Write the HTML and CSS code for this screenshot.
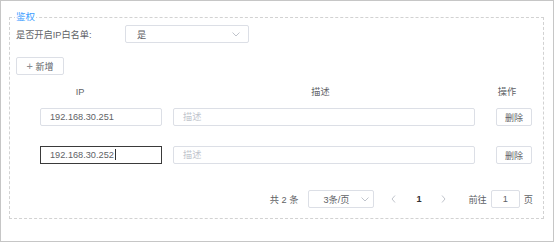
FILE: index.html
```html
<!DOCTYPE html>
<html>
<head>
  <title>鉴权</title>
  <link rel="stylesheet" href="styles.css">
</head>
<body>
  <div class="frame">
    <fieldset class="auth-box">
      <legend>鉴权</legend>

      <div class="form-row">
        <label class="form-label">是否开启IP白名单:</label>
        <div class="select wide">
          <span>是</span>
          <svg class="arrow" width="8" height="5" viewBox="0 0 8 5"><path d="M0.5 0.5 L4 4 L7.5 0.5" fill="none" stroke="#c0c4cc" stroke-width="1"/></svg>
        </div>
      </div>

      <button class="btn add-btn"><span class="plus">+</span> 新增</button>

      <div class="table-head">
        <div class="th th-ip">IP</div>
        <div class="th th-desc">描述</div>
        <div class="th th-op">操作</div>
      </div>

      <div class="table-row">
        <div class="input ip">192.168.30.251</div>
        <div class="input desc placeholder">描述</div>
        <button class="btn del-btn">删除</button>
      </div>

      <div class="table-row second">
        <div class="input ip focused">192.168.30.252<span class="caret"></span></div>
        <div class="input desc placeholder">描述</div>
        <button class="btn del-btn">删除</button>
      </div>

      <div class="pager">
        <span class="total">共 2 条</span>
        <div class="select sizes">
          <span>3条/页</span>
          <svg class="arrow" width="8" height="5" viewBox="0 0 8 5"><path d="M0.5 0.5 L4 4 L7.5 0.5" fill="none" stroke="#c0c4cc" stroke-width="1"/></svg>
        </div>
        <span class="page-btn">
          <svg width="5" height="8" viewBox="0 0 5 8"><path d="M4 0.5 L1 4 L4 7.5" fill="none" stroke="#c0c4cc" stroke-width="1"/></svg>
        </span>
        <span class="page-btn current">1</span>
        <span class="page-btn">
          <svg width="5" height="8" viewBox="0 0 5 8"><path d="M1 0.5 L4 4 L1 7.5" fill="none" stroke="#c0c4cc" stroke-width="1"/></svg>
        </span>
        <span class="jump">前往</span>
        <div class="input jump-input">1</div>
        <span class="jump-unit">页</span>
      </div>
    </fieldset>
  </div>
</body>
</html>
```

FILE: styles.css
```css
body {
  margin: 0;
  background: #ffffff;
  font-family: 'Liberation Sans', 'Noto Sans CJK SC', sans-serif;
  font-size: 9.2px;
  color: #606266;
}

.frame {
  width: 552px;
  height: 240px;
  border: 1px solid #c6c6c6;
}

.auth-box {
  box-sizing: border-box;
  width: 535px;
  height: 208px;
  margin: 10px 0 0 8px;
  padding: 0 6px;
  border: 1px dashed #d2d2d2;
}

.auth-box legend {
  padding: 0 1px;
  margin-left: -1px;
  line-height: 12px;
  font-size: 9.5px;
  color: #409eff;
}

.form-row {
  display: flex;
  align-items: center;
  margin-top: 2px;
}

.form-label {
  width: 109px;
  color: #606266;
}

.select {
  box-sizing: border-box;
  display: flex;
  align-items: center;
  justify-content: space-between;
  height: 18px;
  border: 1px solid #dcdfe6;
  border-radius: 2px;
}

.select.wide {
  width: 124px;
  padding: 0 8px 0 11px;
}

.arrow {
  display: block;
}

.btn {
  box-sizing: border-box;
  height: 18px;
  padding: 0;
  background: #ffffff;
  border: 1px solid #dcdfe6;
  border-radius: 2px;
  font-family: inherit;
  font-size: 9px;
  color: #606266;
}

.add-btn {
  display: block;
  width: 48px;
  margin-top: 14px;
}

.plus {
  font-size: 11px;
  font-weight: 300;
  color: #8a8c90;
}

.table-head {
  display: flex;
  height: 16px;
  line-height: 16px;
  margin-top: 9px;
}

.th {
  text-align: center;
  white-space: nowrap;
  color: #606266;
}

.th-ip {
  width: 128px;
}

.th-desc {
  width: 353px;
}

.th-op {
  width: 20px;
}

.table-row {
  display: flex;
  align-items: center;
  margin-top: 8px;
  margin-left: 24px;
}

.table-row.second {
  margin-top: 20px;
}

.input {
  box-sizing: border-box;
  height: 18px;
  line-height: 16px;
  border: 1px solid #dcdfe6;
  border-radius: 2px;
  color: #606266;
}

.input.ip {
  width: 122px;
  padding-left: 9px;
}

.input.focused {
  border-color: #3a3a3a;
  border-radius: 0;
}

.caret {
  display: inline-block;
  width: 1px;
  height: 11px;
  margin-left: 1px;
  vertical-align: -2px;
  background: #303133;
}

.input.desc {
  width: 302px;
  margin-left: 11px;
  padding-left: 9px;
}

.placeholder {
  color: #c0c4cc;
}

.del-btn {
  width: 36px;
  margin-left: 21px;
}

.pager {
  display: flex;
  align-items: center;
  justify-content: flex-end;
  margin-top: 26px;
  padding-right: 4px;
  height: 18px;
}

.total {
  margin-right: 10px;
}

.select.sizes {
  width: 66px;
  padding: 0 4px 0 14px;
  margin-right: 7px;
}

.page-btn {
  display: flex;
  align-items: center;
  justify-content: center;
  width: 25px;
  height: 18px;
}

.page-btn.current {
  font-weight: bold;
  color: #303133;
}

.jump {
  margin-left: 12px;
}

.jump-input {
  width: 29px;
  margin-left: 4px;
  text-align: center;
}

.jump-unit {
  margin-left: 4px;
}
```
